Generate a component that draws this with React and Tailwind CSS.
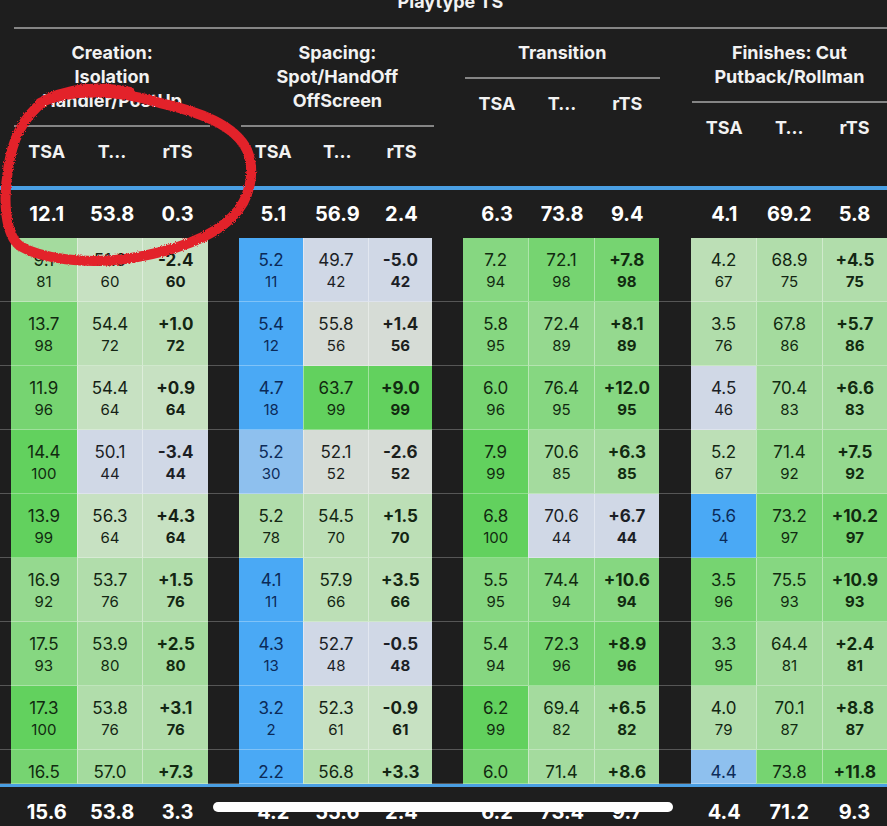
import React from "react";

const groups = [
  { title: ["Creation:", "Isolation", "Handler/PostUp"], box: "w-[197px]" },
  { title: ["Spacing:", "Spot/HandOff", "OffScreen"], box: "w-[193px] ml-[31px]" },
  { title: ["Transition"], box: "w-[196px] ml-[31px]" },
  { title: ["Finishes: Cut", "Putback/Rollman"], box: "w-[196px] ml-[32px]" },
];

const summary = [
  ["12.1", "53.8", "0.3"],
  ["5.1", "56.9", "2.4"],
  ["6.3", "73.8", "9.4"],
  ["4.1", "69.2", "5.8"],
];

const footer = [
  ["15.6", "53.8", "3.3"],
  ["4.2", "55.6", "2.4"],
  ["6.2", "73.4", "9.7"],
  ["4.4", "71.2", "9.3"],
];

// each cell: [value, percentile]
const rows = [
  [
    [["9.1", 81], ["51.6", 60], ["-2.4", 60]],
    [["5.2", 11], ["49.7", 42], ["-5.0", 42]],
    [["7.2", 94], ["72.1", 98], ["+7.8", 98]],
    [["4.2", 67], ["68.9", 75], ["+4.5", 75]],
  ],
  [
    [["13.7", 98], ["54.4", 72], ["+1.0", 72]],
    [["5.4", 12], ["55.8", 56], ["+1.4", 56]],
    [["5.8", 95], ["72.4", 89], ["+8.1", 89]],
    [["3.5", 76], ["67.8", 86], ["+5.7", 86]],
  ],
  [
    [["11.9", 96], ["54.4", 64], ["+0.9", 64]],
    [["4.7", 18], ["63.7", 99], ["+9.0", 99]],
    [["6.0", 96], ["76.4", 95], ["+12.0", 95]],
    [["4.5", 46], ["70.4", 83], ["+6.6", 83]],
  ],
  [
    [["14.4", 100], ["50.1", 44], ["-3.4", 44]],
    [["5.2", 30], ["52.1", 52], ["-2.6", 52]],
    [["7.9", 99], ["70.6", 85], ["+6.3", 85]],
    [["5.2", 67], ["71.4", 92], ["+7.5", 92]],
  ],
  [
    [["13.9", 99], ["56.3", 64], ["+4.3", 64]],
    [["5.2", 78], ["54.5", 70], ["+1.5", 70]],
    [["6.8", 100], ["70.6", 44], ["+6.7", 44]],
    [["5.6", 4], ["73.2", 97], ["+10.2", 97]],
  ],
  [
    [["16.9", 92], ["53.7", 76], ["+1.5", 76]],
    [["4.1", 11], ["57.9", 66], ["+3.5", 66]],
    [["5.5", 95], ["74.4", 94], ["+10.6", 94]],
    [["3.5", 96], ["75.5", 93], ["+10.9", 93]],
  ],
  [
    [["17.5", 93], ["53.9", 80], ["+2.5", 80]],
    [["4.3", 13], ["52.7", 48], ["-0.5", 48]],
    [["5.4", 94], ["72.3", 96], ["+8.9", 96]],
    [["3.3", 95], ["64.4", 81], ["+2.4", 81]],
  ],
  [
    [["17.3", 100], ["53.8", 76], ["+3.1", 76]],
    [["3.2", 2], ["52.3", 61], ["-0.9", 61]],
    [["6.2", 99], ["69.4", 82], ["+6.5", 82]],
    [["4.0", 79], ["70.1", 87], ["+8.8", 87]],
  ],
  [
    [["16.5", 97], ["57.0", 82], ["+7.3", 82]],
    [["2.2", 1], ["56.8", 76], ["+3.3", 76]],
    [["6.0", 97], ["71.4", 86], ["+8.6", 86]],
    [["4.4", 30], ["73.8", 98], ["+11.8", 98]],
  ],
];

function tone(p) {
  if (p >= 99) return "bg-[#62d15e] text-[#112a10]";
  if (p >= 96) return "bg-[#76d471] text-[#112a10]";
  if (p >= 93) return "bg-[#86d781] text-[#112a10]";
  if (p >= 88) return "bg-[#95d98f] text-[#112a10]";
  if (p >= 80) return "bg-[#a4db9e] text-[#112a10]";
  if (p >= 74) return "bg-[#b1ddab] text-[#132613]";
  if (p >= 66) return "bg-[#bcdfb6] text-[#132613]";
  if (p >= 58) return "bg-[#c7e1c2] text-[#151f15]";
  if (p >= 50) return "bg-[#d6dcd6] text-[#1c1f1c]";
  if (p >= 40) return "bg-[#d0d8e6] text-[#1c1f26]";
  if (p >= 25) return "bg-[#8ec0ee] text-[#0d2c5a]";
  return "bg-[#4aa9f5] text-[#0b2a58]";
}

function Cell({ value, pct, col, last }) {
  const bold = col === 2;
  return (
    <div
      className={`flex flex-col items-center pt-[11px] border-b border-white/30 ${tone(pct)} ${
        col > 0 ? "border-l border-l-white/40" : ""
      }`}
    >
      <span className={`text-[17px] leading-[22px] ${bold ? "font-bold" : ""}`}>{value}</span>
      {!last && (
        <span className={`text-[15px] leading-[20px] mt-px ${bold ? "font-bold" : ""}`}>{pct}</span>
      )}
    </div>
  );
}

function ValueRow({ data, height }) {
  return (
    <div className={`flex ${height} pl-[14px] text-white font-bold text-[20px]`}>
      {groups.map((g, gi) => (
        <div key={gi} className={`grid grid-cols-3 items-center text-center ${g.box}`}>
          {data[gi].map((v, i) => (
            <span key={i}>{v}</span>
          ))}
        </div>
      ))}
    </div>
  );
}

export default function App() {
  return (
    <div className="relative w-[887px] h-[826px] overflow-hidden bg-[#1e1e1e] font-[Inter,sans-serif] text-white">
      <div className="flex flex-col h-[27px] ml-[14px] text-center">
        <div className="-mt-[10px] text-[18px] leading-6 font-bold text-[#f2f2f2]">Playtype TS</div>
      </div>
      <div className="ml-[14px] h-[2px] bg-[#858585]" />

      <div className="flex h-[157px] pl-[14px]">
        {groups.map((g, gi) => (
          <div key={gi} className={`flex flex-col ${g.box}`}>
            <div className="pt-[12px] text-center text-[18px] leading-6 font-bold text-[#f2f2f2]">
              {g.title.map((t) => (
                <div key={t}>{t}</div>
              ))}
            </div>
            <div className="mt-[12px] h-[2px] bg-[#858585]" />
            <div className="mt-[13px] grid grid-cols-3 text-center text-[18px] leading-6 font-bold text-[#f2f2f2]">
              <span>TSA</span>
              <span>T…</span>
              <span>rTS</span>
            </div>
          </div>
        ))}
      </div>

      <div className="h-[4px] bg-[#4a9fe3]" />
      <ValueRow data={summary} height="h-[48px]" />

      <div className="flex flex-col">
        {rows.map((row, ri) => {
          const last = ri === rows.length - 1;
          return (
            <div key={ri} className={`flex ${last ? "h-[34px] overflow-hidden" : "h-[64px]"}`}>
              <div className="w-[14px] border-b border-white/25" />
              {row.map((grp, gi) => (
                <div key={gi} className="flex">
                  {gi > 0 && (
                    <div
                      className={`border-b border-white/25 ${gi === 3 ? "w-[32px]" : "w-[31px]"}`}
                    />
                  )}
                  <div
                    className={`grid grid-cols-3 ${
                      gi === 0 ? "w-[197px]" : gi === 1 ? "w-[193px]" : "w-[196px]"
                    }`}
                  >
                    {grp.map(([v, p], ci) => (
                      <Cell key={ci} value={v} pct={p} col={ci} last={last} />
                    ))}
                  </div>
                </div>
              ))}
            </div>
          );
        })}
      </div>

      <div className="h-[3px] bg-[#4a9fe3]" />
      <ValueRow data={footer} height="h-[50px]" />

      {/* home indicator */}
      <div className="absolute left-[213px] top-[802px] w-[460px] h-[10px] rounded-full bg-white" />

      {/* hand-drawn annotation */}
      <svg
        className="absolute inset-0 pointer-events-none"
        width="887"
        height="826"
        viewBox="0 0 887 826"
      >
        <defs>
          <filter id="crayon" x="-10%" y="-10%" width="120%" height="120%">
            <feTurbulence type="fractalNoise" baseFrequency="0.9" numOctaves="2" seed="3" result="n" />
            <feDisplacementMap in="SourceGraphic" in2="n" scale="3" />
          </filter>
        </defs>
        <path
          d="M 40 103 C 70 88, 120 90, 160 103 C 200 112, 235 125, 247 150 C 256 172, 250 200, 232 217 C 214 236, 175 252, 125 259 C 85 264, 42 259, 20 246 C 5 235, 3 200, 8 170 C 12 140, 22 118, 45 100 C 70 88, 100 86, 130 92"
          fill="none"
          stroke="#e3202b"
          strokeWidth="10"
          strokeLinecap="round"
          strokeLinejoin="round"
          filter="url(#crayon)"
        />
      </svg>
    </div>
  );
}
